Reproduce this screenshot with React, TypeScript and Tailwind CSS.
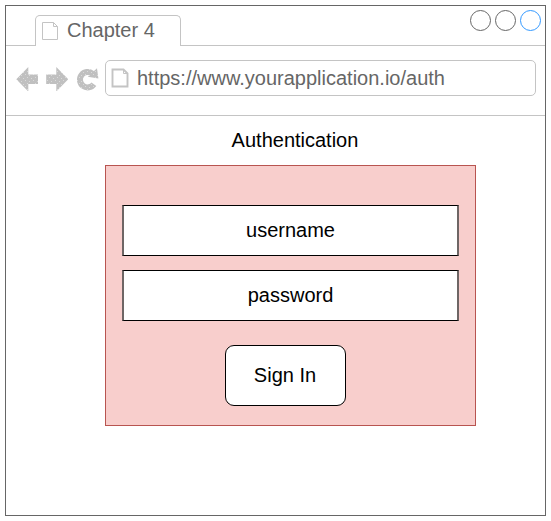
import React from "react";

function PageIcon({ strokeWidth, className }: { strokeWidth: number; className: string }) {
  return (
    <svg viewBox="0 0 18 20" className={className} fill="none" stroke="#c4c4c4" strokeWidth={strokeWidth}>
      <path d="M1.5 1.5H12.5L16.5 5.5V18.5H1.5Z" />
      <path d="M12.5 1.5V5.5H16.5" strokeWidth="1" />
    </svg>
  );
}

function StippleDefs({ id }: { id: string }) {
  return (
    <defs>
      <pattern id={id} width="8" height="6" patternUnits="userSpaceOnUse">
        <rect width="8" height="6" fill="#c0c0c0" />
        <path d="M1 1h1v1h-1zM5 2h1v1h-1zM3 4h1v1h-1zM7 5h1v1h-1z" fill="#dadada" />
      </pattern>
    </defs>
  );
}

function BackIcon() {
  return (
    <svg viewBox="0 0 22 24" className="h-6 w-[22px]">
      <StippleDefs id="stipple-back" />
      <path d="M0.3 12.3L12.3 0V7.5H22.5V17H12.3V24.5Z" fill="url(#stipple-back)" />
    </svg>
  );
}

function ForwardIcon() {
  return (
    <svg viewBox="0 0 22 24" className="h-6 w-[22px]">
      <StippleDefs id="stipple-forward" />
      <path d="M22.3 12.3L10.3 0V7.5H0.2V17H10.3V24.5Z" fill="url(#stipple-forward)" />
    </svg>
  );
}

function ReloadIcon() {
  return (
    <svg viewBox="0 0 22 24" className="h-6 w-[22px] overflow-visible">
      <StippleDefs id="stipple-reload" />
      <path d="M16.4 6.6A7.7 7.7 0 1 0 17.9 17.2" fill="none" stroke="url(#stipple-reload)" strokeWidth="6" />
      <path d="M21 1.3L22.4 11.4L11.8 9.7Z" fill="url(#stipple-reload)" />
    </svg>
  );
}

function WindowButton({ color }: { color: string }) {
  return <span className={`h-[21px] w-[21px] rounded-full border ${color}`} />;
}

function Field({ label }: { label: string }) {
  return (
    <div className="flex h-[51px] w-[337px] items-center justify-center border-x-2 border-y border-x-[#6e6665] border-y-black bg-white pb-[2px]">
      {label}
    </div>
  );
}

export default function App() {
  return (
    <div className="h-[521px] w-[551px] bg-white pt-[5px] pl-[5px] font-['Helvetica','Liberation_Sans',Arial,sans-serif] text-[20px] leading-6 text-black">
      <div className="h-[511px] w-[541px] border border-[#666666]">
        <header className="flex h-10">
          <div className="w-[29px] border-b border-[#c4c4c4]" />
          <div className="mt-[9px] flex w-[146px] rounded-t-[5px] border border-b-0 border-[#c4c4c4] pl-[5px] text-[#666666]">
            <PageIcon strokeWidth={1} className="mt-[5px] h-5 w-[18px]" />
            <span className="mt-[2px] ml-[8px] whitespace-nowrap">Chapter 4</span>
          </div>
          <div className="flex flex-1 justify-end gap-1 border-b border-[#c4c4c4] pt-1 pr-[4px]">
            <WindowButton color="border-[#666666]" />
            <WindowButton color="border-[#666666]" />
            <WindowButton color="border-[#3399ff]" />
          </div>
        </header>
        <nav className="flex h-[70px] border-b border-[#c4c4c4] pt-[14px] pl-[10px]">
          <div className="mt-[7px] flex w-[89px] gap-2">
            <BackIcon />
            <ForwardIcon />
            <ReloadIcon />
          </div>
          <div className="flex h-9 w-[431px] rounded-[5px] border border-[#c4c4c4] pl-[5px] text-[#666666]">
            <PageIcon strokeWidth={1.9} className="mt-[7px] h-5 w-[18px]" />
            <span className="mt-[5px] ml-[8px]">https://www.yourapplication.io/auth</span>
          </div>
        </nav>
        <main className="flex flex-col pt-[12px] pl-[99px]">
          <h1 className="w-[380px] text-center">Authentication</h1>
          <section className="mt-[13px] flex h-[261px] w-[371px] flex-col items-center border border-[#b85450] bg-[#f8cecc] pt-[39px]">
            <div className="flex flex-col gap-[14px]">
              <Field label="username" />
              <Field label="password" />
            </div>
            <button className="mt-6 mr-[10px] h-[61px] w-[121px] rounded-[9px] border border-black bg-white pr-[1px] pb-[2px]">
              Sign In
            </button>
          </section>
        </main>
      </div>
    </div>
  );
}
